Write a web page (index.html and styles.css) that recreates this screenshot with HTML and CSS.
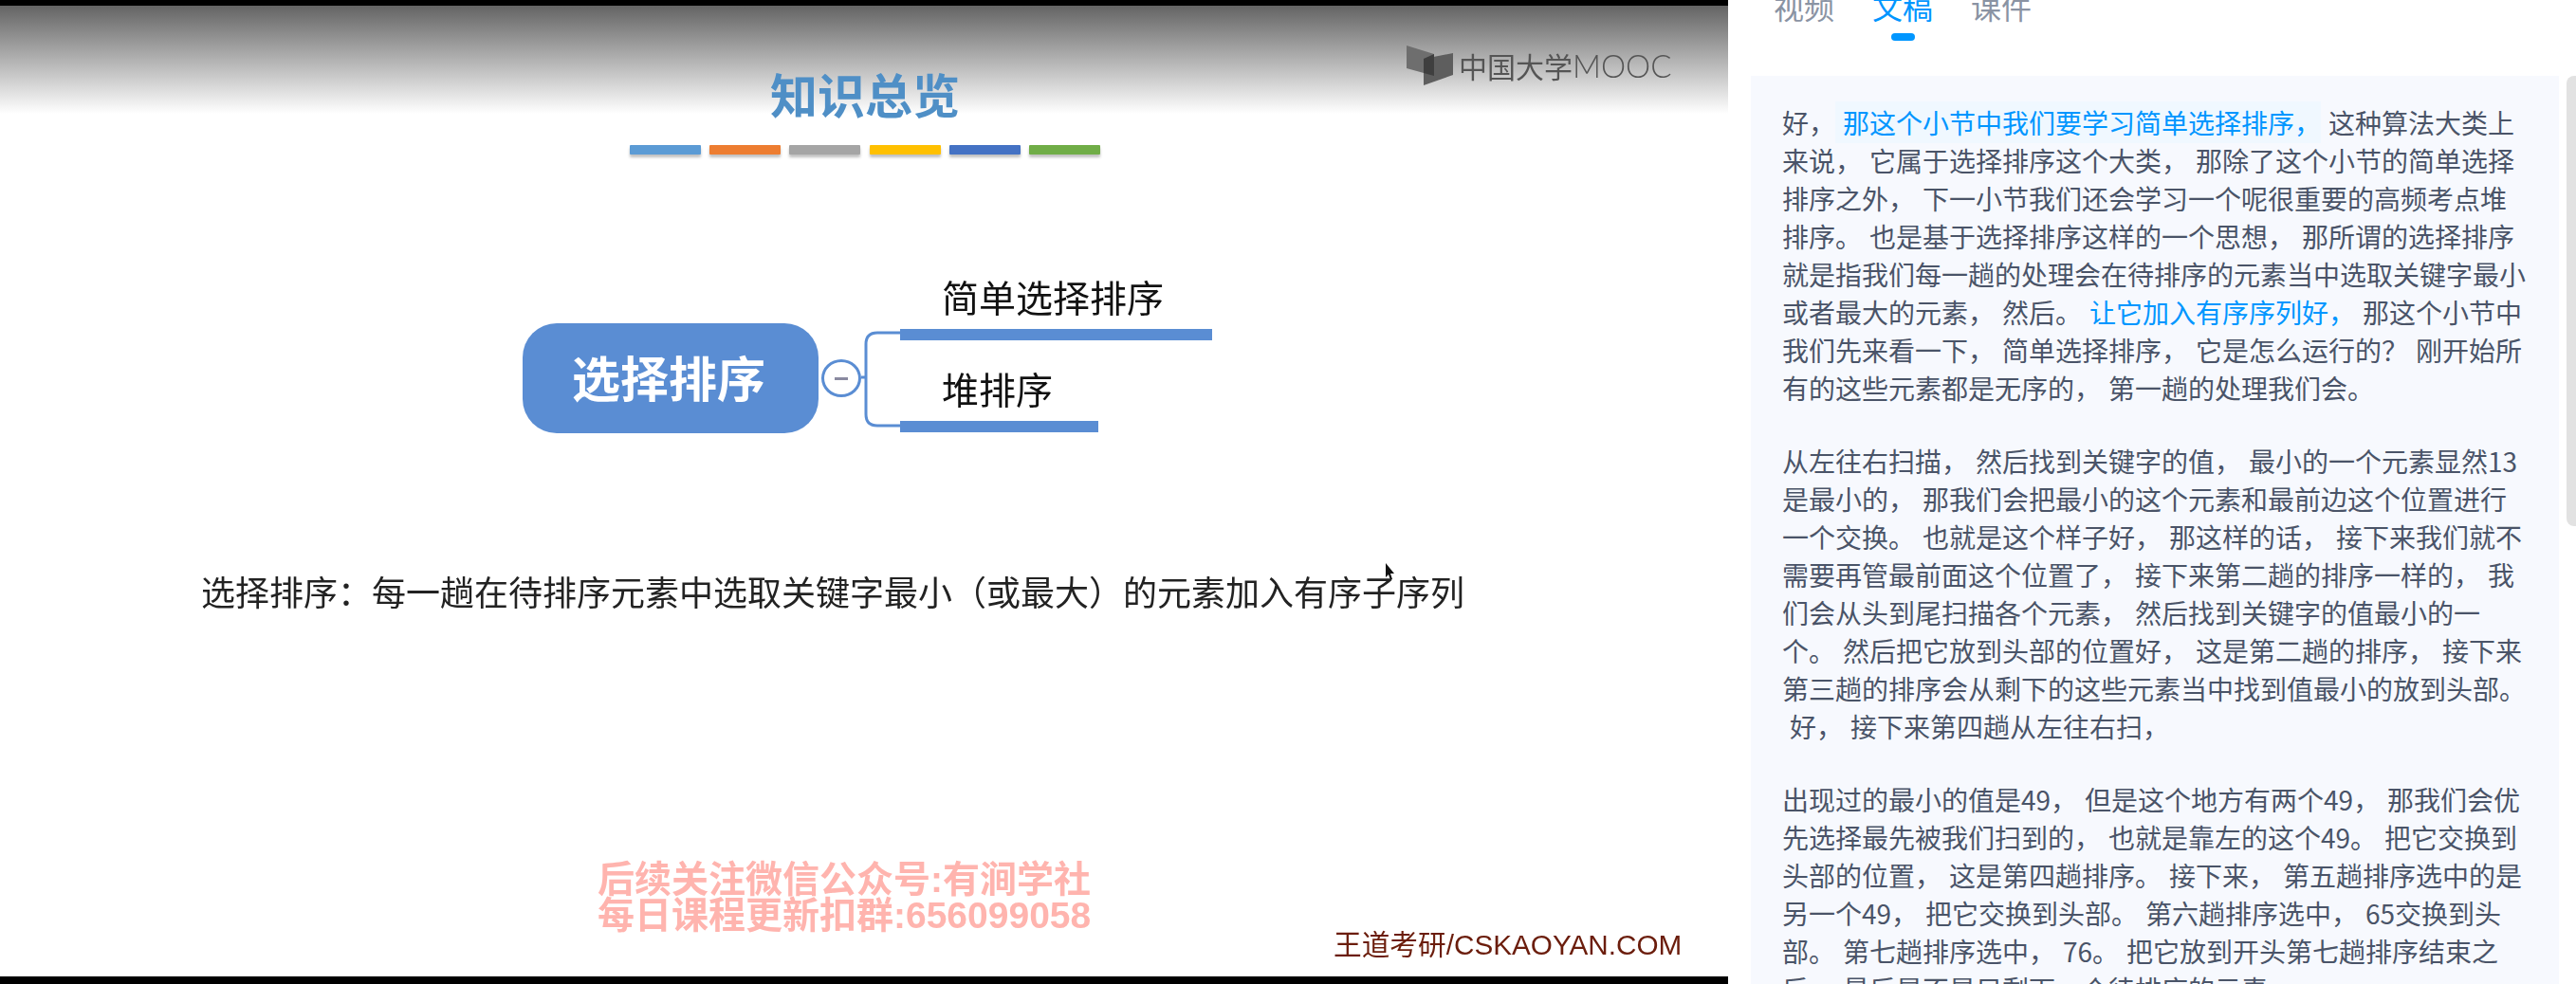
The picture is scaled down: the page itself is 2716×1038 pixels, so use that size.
FILE: index.html
```html
<!DOCTYPE html>
<html lang="zh-CN">
<head>
  <meta charset="UTF-8"/>
  <title>选择排序</title>
  <link rel="stylesheet" href="styles.css">
</head>
<body>
  <div class="video">
    <div class="slide">
      <!-- logo top right -->
      <div class="logo">
        <svg class="logo-icon" width="49" height="44" viewBox="0 0 49 44">
          <polygon points="0,1 29,10 29,33 0,25" fill="#6e6e6e"/>
          <polygon points="18,15 49,9 49,32 18,43" fill="#5e5e5e"/>
          <polygon points="18,15 29,10 29,33 18,30" fill="#3f3f3f"/>
        </svg>
        <span class="logo-text">中国大学<span class="logo-latin">MOOC</span></span>
      </div>

      <div class="slide-head">
        <h1 class="slide-title">知识总览</h1>
        <div class="color-bars">
          <i class="bar c1"></i>
          <i class="bar c2"></i>
          <i class="bar c3"></i>
          <i class="bar c4"></i>
          <i class="bar c5"></i>
          <i class="bar c6"></i>
        </div>
      </div>

      <!-- mind map -->
      <div class="mindmap">
        <div class="root">选择排序</div>
        <div class="toggle"><i></i></div>
        <svg class="connector" width="41" height="173" viewBox="0 0 41 173">
          <path d="M0 115H5M41 68H17Q5 68 5 80V154Q5 166 17 166H41" fill="none" stroke="#5a8dd3" stroke-width="3"/>
        </svg>
        <div class="branches">
          <div class="branch long">简单选择排序</div>
          <div class="branch short">堆排序</div>
        </div>
      </div>

      <p class="sentence">选择排序：每一趟在待排序元素中选取关键字最小（或最大）的元素加入有序子序列</p>
      <svg class="cursor" width="12" height="19" viewBox="0 0 12 19">
        <path d="M1 0L1 15L4 12L6 18L8 17L6 11L10 11Z" fill="#111"/>
      </svg>

      <div class="slide-foot">
        <div class="watermark">后续关注微信公众号:有涧学社<br>每日课程更新扣群:656099058</div>
        <div class="source">王道考研/CSKAOYAN.COM</div>
      </div>
    </div>
  </div>

  <div class="side">
    <div class="tabs">
      <div class="tab">视频</div>
      <div class="tab active">文稿</div>
      <div class="tab">课件</div>
    </div>
    <div class="doc">
      <div class="transcript">
        <p>好，<span class="hl current"> 那这个小节中我们要学习简单选择排序，</span> 这种算法大类上来说， 它属于选择排序这个大类， 那除了这个小节的简单选择排序之外， 下一小节我们还会学习一个呢很重要的高频考点堆排序。 也是基于选择排序这样的一个思想， 那所谓的选择排序就是指我们每一趟的处理会在待排序的元素当中选取关键字最小或者最大的元素， 然后。<span class="hl"> 让它加入有序序列好，</span> 那这个小节中我们先来看一下， 简单选择排序， 它是怎么运行的？ 刚开始所有的这些元素都是无序的， 第一趟的处理我们会。</p>
        <p>从左往右扫描， 然后找到关键字的值， 最小的一个元素显然13是最小的， 那我们会把最小的这个元素和最前边这个位置进行一个交换。 也就是这个样子好， 那这样的话， 接下来我们就不需要再管最前面这个位置了， 接下来第二趟的排序一样的， 我们会从头到尾扫描各个元素， 然后找到关键字的值最小的一个。 然后把它放到头部的位置好， 这是第二趟的排序， 接下来第三趟的排序会从剩下的这些元素当中找到值最小的放到头部。<br>&nbsp;好， 接下来第四趟从左往右扫，</p>
        <p>出现过的最小的值是49， 但是这个地方有两个49， 那我们会优先选择最先被我们扫到的， 也就是靠左的这个49。 把它交换到头部的位置， 这是第四趟排序。 接下来， 第五趟排序选中的是另一个49， 把它交换到头部。 第六趟排序选中， 65交换到头部。 第七趟排序选中， 76。 把它放到开头第七趟排序结束之后， 最后是不是只剩下一个待排序的元素</p>
      </div>
      <div class="scrollbar"></div>
    </div>
  </div>
</body>
</html>
```

FILE: styles.css
```css
* {
  box-sizing: border-box;
}
html, body {
  margin: 0;
  height: 1038px;
  overflow: hidden;
}
body {
  display: flex;
  background-color: #fff;
  font-family: "Noto Sans CJK SC", "Liberation Sans", sans-serif;
}

/* video side */
.video {
  width: 1822px;
  height: 1038px;
  flex-shrink: 0;
  background-color: #000;
  padding: 6px 0 8px;
}
.slide {
  position: relative;
  height: 100%;
  padding-top: 62px;
  background: #fff linear-gradient(#646464, #fff) no-repeat;
  background-size: 100% 114px;
  filter: blur(0.6px);
}
.logo {
  position: absolute;
  left: 1483px;
  top: 41px;
  display: flex;
  align-items: center;
  gap: 6px;
  color: #555;
}
.logo-text {
  font-size: 30px;
  line-height: 40px;
  white-space: nowrap;
}
.logo-latin {
  font-family: Lato, "Liberation Sans", sans-serif;
  font-size: 33px;
  font-weight: 300;
}
.slide-head {
  width: 496px;
  margin-left: 664px;
}
.slide-title {
  margin: 0 0 25px;
  font-size: 50px;
  line-height: 60px;
  font-weight: 700;
  text-align: center;
  color: #4f8fc6;
}
.color-bars {
  display: flex;
  justify-content: space-between;
}
.bar {
  width: 75px;
  height: 10px;
  border-radius: 1px;
  box-shadow: 0 3px 3px rgba(0, 0, 0, 0.25);
}
.c1 { background-color: #5b9bd5; }
.c2 { background-color: #ed7d31; }
.c3 { background-color: #a5a5a5; }
.c4 { background-color: #ffc000; }
.c5 { background-color: #4472c4; }
.c6 { background-color: #70ad47; }

.mindmap {
  display: flex;
  align-items: flex-start;
  margin: 120px 0 0 551px;
}
.root {
  width: 312px;
  height: 116px;
  margin-top: 58px;
  border-radius: 36px;
  background-color: #5a8dd3;
  color: #fff;
  font-size: 51px;
  font-weight: 700;
  line-height: 112px;
  text-align: center;
  padding-right: 4px;
}
.toggle {
  display: flex;
  align-items: center;
  justify-content: center;
  width: 42px;
  height: 40px;
  margin: 96px 0 0 3px;
  border: 3px solid #5a8dd3;
  border-radius: 50%;
  background-color: #fff;
}
.toggle i {
  width: 14px;
  height: 3px;
  background-color: #8a8aa0;
}
.branches {
  display: flex;
  flex-direction: column;
  gap: 21px;
}
.branch {
  padding: 0 0 6px 44px;
  border-bottom: 12px solid #5a8dd3;
  color: #111;
  font-size: 39px;
  line-height: 58px;
}
.branch.long { width: 329px; }
.branch.short { width: 209px; }

.sentence {
  margin: 141px 0 0 212px;
  color: #222;
  font-size: 36px;
  line-height: 50px;
}
.cursor {
  position: absolute;
  left: 1460px;
  top: 588px;
}
.slide-foot {
  display: flex;
  min-height: 106px;
  margin: 261px 0 0 630px;
}
.watermark {
  width: 523px;
  flex-shrink: 0;
  color: #ffb4ae;
  font-family: "Liberation Sans", "Noto Sans CJK SC", sans-serif;
  font-size: 39px;
  font-weight: 700;
  line-height: 38px;
  white-space: nowrap;
}
.source {
  align-self: flex-end;
  margin: 0 0 0 253px;
  color: #6b1d0c;
  font-family: "Liberation Sans", "Noto Sans CJK SC", sans-serif;
  font-size: 29.7px;
  line-height: 36px;
  white-space: nowrap;
}

/* transcript side */
.side {
  flex: 1;
  height: 1038px;
  overflow: hidden;
}
.tabs {
  display: flex;
  gap: 40px;
  margin: -18px 0 37px 48px;
}
.tab {
  display: flex;
  flex-direction: column;
  align-items: center;
  color: #8a93a3;
  font-size: 32px;
  line-height: 48px;
}
.tab.active {
  color: #0096ff;
}
.tab.active::after {
  content: "";
  width: 25px;
  height: 8px;
  margin-top: 5px;
  border-radius: 4px;
  background-color: #0096ff;
}
.doc {
  display: flex;
  align-items: flex-start;
  gap: 8px;
  margin-left: 24px;
}
.transcript {
  width: 852px;
  flex-shrink: 0;
  padding: 29px 33px 0;
  background-color: #f7f9fe;
  color: #4a5468;
  font-size: 28px;
  line-height: 40px;
  word-spacing: 1.7px;
}
.transcript p {
  margin: 0 0 37px;
}
.hl {
  color: #0096ff;
}
.hl.current {
  padding: 2px 0;
  background-color: #f0f8ff;
}
.scrollbar {
  width: 10px;
  height: 475px;
  flex-shrink: 0;
  border-radius: 8px 0 0 8px;
  background-color: #e2e2e2;
}
```
